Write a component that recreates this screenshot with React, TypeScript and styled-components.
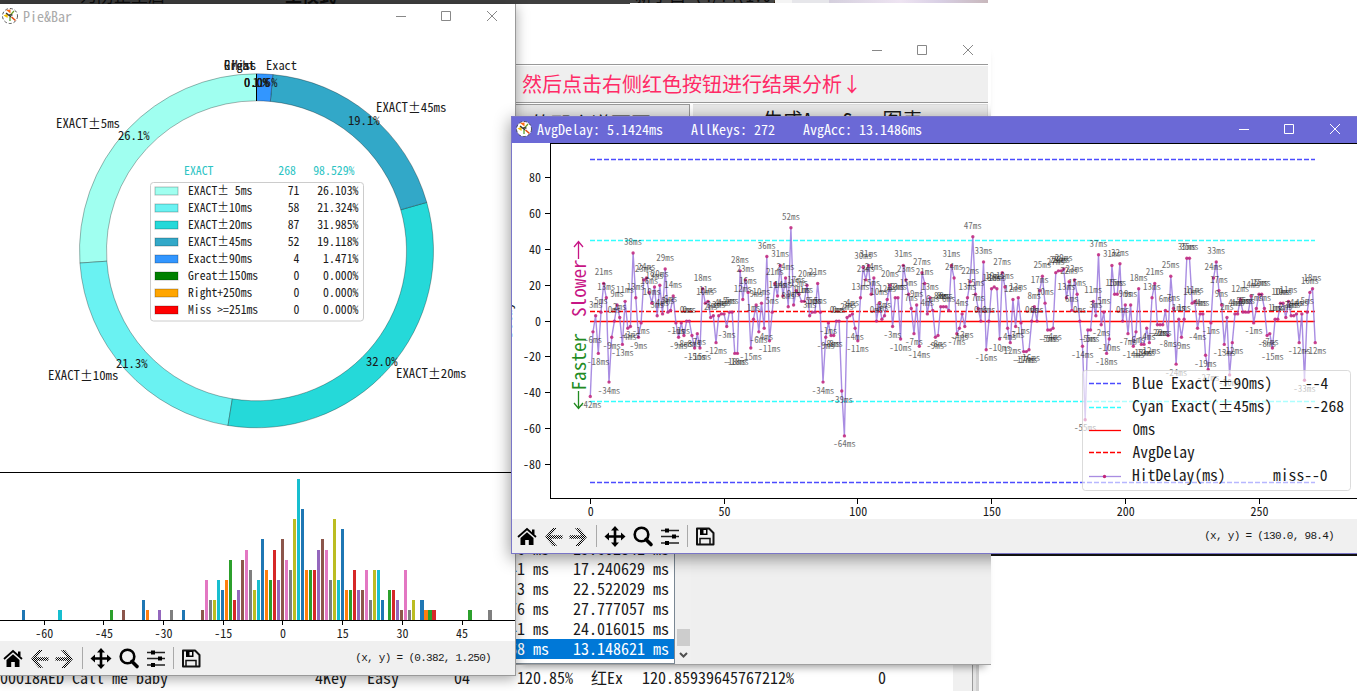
import React from "react";
import styled, { createGlobalStyle } from "styled-components";

const MONO = `"Noto Sans Mono CJK SC", "Noto Sans CJK SC", "Liberation Mono", monospace`;

const Global = createGlobalStyle`
  html, body { margin: 0; padding: 0; background: #fff; }
  body { font-family: ${MONO}; font-weight: 300; font-feature-settings: "hwid", "zero"; color: #1a1a1a; }
  * { box-sizing: border-box; }
  svg { display: block; }
`;

const Desktop = styled.div`
  position: relative;
  width: 1357px;
  height: 691px;
  overflow: hidden;
  background: #fff;
`;

const Strip = styled.div`
  position: absolute;
  left: 0;
  top: 0;
  width: 988px;
  height: 4px;
  display: flex;
  overflow: hidden;
`;

const StripPart = styled.div<{ $w: number; $bg: string; $h?: number }>`
  width: ${(p) => p.$w}px;
  height: ${(p) => p.$h ?? 4}px;
  overflow: hidden;
  background: ${(p) => p.$bg};
`;

const StripText = styled.span<{ $gap: number; $bold?: boolean }>`
  display: block;
  margin-left: ${(p) => p.$gap}px;
  margin-top: -15px;
  font-size: 17px;
  line-height: 20px;
  color: #0c0c0c;
  font-weight: ${(p) => (p.$bold ? 700 : 400)};
  white-space: nowrap;
`;

const EdgeLine = styled.div`
  position: absolute;
  left: 515px;
  top: 4px;
  width: 1px;
  height: 34px;
  background: #444;
`;

const ListWindow = styled.div`
  position: absolute;
  left: 0;
  top: 664px;
  width: 979px;
  height: 27px;
  display: flex;
  background: #fff;
`;

const SongRow = styled.div`
  width: 953px;
  height: 27px;
  display: grid;
  grid-template-columns: 315px 52px 87px 63px 74px 51px 236px 1fr;
  font-size: 16px;
  line-height: 27px;
  white-space: pre;
`;

const SideTrack = styled.div`
  width: 20px;
  background: #f0f0f0;
  border-right: 1px solid #9a9a9a;
`;

const SideEdge = styled.div`
  width: 6px;
  background: #e4e4e4;
  border-right: 3px solid #d0d0d0;
`;

const MainWindow = styled.div`
  position: absolute;
  left: 515px;
  top: 40px;
  width: 476px;
  height: 625px;
  display: flex;
  flex-direction: column;
  border-bottom: 1px solid #a0a0a0;
  box-shadow: 0 8px 8px -6px rgba(0, 0, 0, 0.4);
  background: #fff;
`;

const Caption = styled.div`
  height: 24px;
  width: 473px;
  display: flex;
  justify-content: flex-end;
`;

const Hint = styled.div`
  width: 473px;
  height: 39px;
  border-top: 1px solid #999;
  border-bottom: 1px solid #999;
  box-shadow: inset 0 1px #fff;
  background: #efefef;
  color: #ff2a66;
  font-size: 20px;
  line-height: 37px;
  padding-left: 7px;
  white-space: nowrap;
`;

const ButtonRow = styled.div`
  width: 473px;
  height: 24px;
  display: flex;
  gap: 3px;
  padding-top: 1px;
`;

const BigButton = styled.div<{ $w: number; $shift: number; $pad: number; $edge: string }>`
  width: ${(p) => p.$w}px;
  height: 30px;
  overflow: hidden;
  background: #e9e9e9;
  border-top: 1px solid ${(p) => p.$edge};
  border-right: 1px solid ${(p) => p.$edge};
  font-size: 20px;
  font-weight: 400;
  line-height: 30px;
  white-space: nowrap;
  padding-top: ${(p) => p.$shift}px;
  text-indent: ${(p) => p.$pad}px;
`;

const MainBody = styled.div`
  flex: 1;
  display: flex;
  align-items: flex-end;
  background: #efefef;
  margin-top: 300px;
`;

const Listbox = styled.div`
  width: 160px;
  height: 125px;
  overflow: hidden;
  background: #fff;
  border-right: 1px solid #7a8793;
  border-bottom: 1px solid #7a8793;
`;

const ListItem = styled.div<{ $on?: boolean }>`
  height: 20px;
  text-indent: -6px;
  font-size: 16px;
  line-height: 18px;
  white-space: pre;
  overflow: hidden;
  color: ${(p) => (p.$on ? "#fff" : "#1a1a1a")};
  background: ${(p) => (p.$on ? "#0078d7" : "#fff")};
`;

const Scroll = styled.div`
  width: 16px;
  height: 124px;
  display: flex;
  flex-direction: column;
  align-items: center;
  background: #f0f0f0;
`;

const Thumb = styled.div`
  width: 13px;
  height: 17px;
  margin: 89px 0 6px;
  background: #cdcdcd;
`;

const ShadowClip = styled.div`
  position: absolute;
  left: 490px;
  top: 100px;
  width: 501px;
  height: 490px;
  overflow: hidden;
  padding: 16px 0 0 21px;
`;

const ShadowBox = styled.div`
  width: 860px;
  height: 438px;
  box-shadow: 0 4px 16px rgba(0, 0, 0, 0.45);
`;

const BlackBar = styled.div`
  position: absolute;
  left: 991px;
  top: 553px;
  width: 366px;
  height: 3px;
  background: #111;
`;

const PieWindow = styled.div`
  position: absolute;
  left: 0;
  top: 4px;
  width: 516px;
  height: 672px;
  display: flex;
  flex-direction: column;
  background: #fff;
  border-right: 1px solid #999;
  border-bottom: 1px solid #999;
  box-shadow: 0 3px 12px rgba(0, 0, 0, 0.35);
`;

const DelayWindow = styled.div`
  position: absolute;
  left: 511px;
  top: 116px;
  width: 860px;
  height: 438px;
  display: flex;
  flex-direction: column;
  background: #fff;
  border: 1px solid #7a76c8;
`;

const TitleBar = styled.div<{ $active?: boolean }>`
  height: 26px;
  flex: none;
  display: flex;
  align-items: center;
  padding-bottom: 2px;
  padding-left: ${(p) => (p.$active ? 4 : 2)}px;
  background: ${(p) => (p.$active ? "#6b69d6" : "#fff")};
  color: ${(p) => (p.$active ? "#fff" : "#aaa")};
`;

const TitleText = styled.div<{ $w: number }>`
  width: ${(p) => p.$w}px;
  margin-left: 5px;
  font-size: 14px;
  line-height: 24px;
  white-space: pre;
`;

const Controls = styled.div<{ $color: string; $end: number; $lift?: boolean }>`
  margin-left: auto;
  margin-right: ${(p) => p.$end}px;
  margin-top: ${(p) => (p.$lift ? -1 : 0)}px;
  color: ${(p) => p.$color};
`;

const Toolbar = styled.div<{ $left: number; $right: number }>`
  height: 34px;
  flex: none;
  display: flex;
  align-items: center;
  justify-content: space-between;
  background: #f0f0f0;
  padding-left: ${(p) => p.$left}px;
  padding-right: ${(p) => p.$right}px;
`;

const Coords = styled.div`
  font-family: "Liberation Mono", monospace;
  font-size: 11px;
  font-weight: 400;
  letter-spacing: -0.7px;
  white-space: pre;
`;

const TAB = ["#1f77b4", "#ff7f0e", "#2ca02c", "#d62728", "#9467bd", "#8c564b", "#e377c2", "#7f7f7f", "#bcbd22", "#17becf"];

const DELAYS = [
  -42, -6, 3, -18, 5, 21, 13, -34, -9, 0, 9, 2, -13, 11, -4, -3, 38, 13, -9, -1, 23, 24, 16, 10, 19, 3, 20, 4, 29, 5,
  6, 14, -1, -9, -1, -8, 0, 0, -8, -15, -7, -15, 18, 10, 11, 2, 3, -12, 3, 4, 4, -3, 5, 5, -18, -18, 28, 12, 23, 16,
  -15, 1, 9, -6, 10, -4, 36, -11, 5, 21, 14, 31, 14, 24, 8, 52, 9, 17, 15, 11, 11, 20, 3, 5, 5, 21, 5, -34, -9, -1,
  -8, -8, 0, 0, -39, -64, 2, 3, 4, -4, -11, 13, 30, 23, 31, 15, 24, 0, 10, 1, 3, 12, 20, -3, 13, 13, -10, 31, 23, 15,
  7, -7, 9, -14, 27, 21, 4, 13, 6, -9, -8, 8, 8, 8, 6, 31, 24, -7, -4, 4, -3, 13, 22, 47, 15, 7, 0, 33, -16, 0,
  18, 19, 18, -10, 27, 19, -4, -12, 12, -3, 13, -1, -17, -17, -16, 0, 8, 0, 17, 25, 10, -5, -5, -4, 27, 28, 28, 29, 13, 22,
  6, 23, 15, 0, -14, -55, -5, -5, 11, 3, 37, -2, 5, -18, -10, 31, 15, 15, 32, 0, 9, -7, 9, -14, -6, 18, -13, -13, -4, -12,
  13, 21, -2, -2, -2, 6, -8, 25, 7, -24, 1, -9, 1, 35, 35, 10, 11, -4, 4, 4, -19, -27, -1, 24, 33, 17, 9, -13, 2, -30,
  -12, 4, 4, 12, 5, 5, 5, 14, -1, 7, 15, 15, 7, -8, -7, -15, 1, 1, 10, 10, 2, 11, 3, 3, 4, -12, 4, -33, 5, 16,
  18, -12,
];

const BARS: [number, number][] = [
  [-65, 1], [-56, 1], [-43, 1], [-40, 1], [-35, 2], [-34, 1], [-31, 1], [-28, 1], [-25, 1], [-20, 1], [-19, 4],
  [-18, 2], [-17, 2], [-16, 4], [-15, 3], [-14, 4], [-13, 6], [-12, 2], [-11, 3], [-10, 6], [-9, 7], [-8, 5],
  [-7, 3], [-6, 4], [-5, 8], [-4, 5], [-3, 4], [-2, 7], [-1, 4], [0, 8], [1, 6], [2, 5], [3, 10], [4, 14], [5, 11],
  [6, 5], [7, 5], [8, 5], [9, 7], [10, 8], [11, 7], [12, 4], [13, 10], [14, 4], [15, 9], [16, 3], [17, 3], [18, 5],
  [19, 3], [20, 3], [21, 5], [22, 2], [23, 5], [24, 5], [25, 2], [27, 3], [28, 3], [29, 2], [30, 1], [31, 5], [32, 1],
  [33, 2], [35, 2], [36, 1], [37, 1], [38, 1], [47, 1], [52, 1],
];

const LEGEND = [
  { label: "EXACT± 5ms", n: 71, pct: "26.103%", color: "#a0fff0" },
  { label: "EXACT±10ms", n: 58, pct: "21.324%", color: "#6af2f2" },
  { label: "EXACT±20ms", n: 87, pct: "31.985%", color: "#25d9d9" },
  { label: "EXACT±45ms", n: 52, pct: "19.118%", color: "#32a8c8" },
  { label: "Exact±90ms", n: 4, pct: "1.471%", color: "#3296ff" },
  { label: "Great±150ms", n: 0, pct: "0.000%", color: "#008000" },
  { label: "Right+250ms", n: 0, pct: "0.000%", color: "#ffa500" },
  { label: "Miss >=251ms", n: 0, pct: "0.000%", color: "#ff0000" },
];

interface LabelProps {
  x: number;
  y: number;
  size: number;
  children: string;
  adv?: number;
  anchor?: "start" | "middle" | "end";
  fill?: string;
  opacity?: number;
  transform?: string;
}

/* Text on a fixed half-width grid; ± takes two cells. */
function Label({ x, y, size, children, adv, anchor = "start", fill = "#1a1a1a", opacity, transform }: LabelProps) {
  const step = adv ?? size / 2;
  const parts = children.split(/(±)/).filter(Boolean);
  const cells = (s: string) => (s === "±" ? 2 : s.length);
  const total = parts.reduce((a, s) => a + cells(s), 0) * step;
  let cx = anchor === "end" ? x - total : anchor === "middle" ? x - total / 2 : x;
  return (
    <g fontSize={size} fill={fill} opacity={opacity} transform={transform}>
      {parts.map((s, i) => {
        const at = cx;
        cx += cells(s) * step;
        return (
          <text key={i} x={at} y={y} textLength={cells(s) * step} lengthAdjust="spacingAndGlyphs" xmlSpace="preserve">
            {s}
          </text>
        );
      })}
    </g>
  );
}

function WindowButtons() {
  return (
    <svg width="115" height="22" viewBox="0 0 115 22" fill="none" stroke="currentColor" strokeWidth="1">
      <path d="M0 11.500h10M45.500 6.500h9v9h-9z" />
      <path d="M91 6l10 10M101 6l-10 10" />
    </svg>
  );
}

function AppIcon() {
  return (
    <svg width="16" height="16" viewBox="0 0 16 16">
      <circle cx="8" cy="8" r="7.500" fill="#fff" stroke="#444" strokeWidth="0.900" strokeDasharray="3 2" />
      <path d="M4 2l4.500-.5v4z" fill="#ff6a10" />
      <path d="M1.500 7.500L6 5.500 5.500 10z" fill="#f5c000" />
      <path d="M4 5l5 4" stroke="#333" strokeWidth="1.300" />
      <path d="M8.500 7l3.500-4" stroke="#6a9a20" strokeWidth="1.200" />
      <path d="M8 9v4" stroke="#4a9a20" strokeWidth="1.200" />
      <path d="M9.500 9l4 3.500" stroke="#e04a10" strokeWidth="1.600" />
      <path d="M7 7h3.500" stroke="#222" strokeWidth="1.300" />
    </svg>
  );
}

function ToolIcons({ id }: { id: string }) {
  const dither = `url(#${id})`;
  return (
    <svg width="204" height="30" viewBox="0 0 204 30">
      <defs>
        <pattern id={id} width="2" height="2" patternUnits="userSpaceOnUse">
          <rect width="1" height="1" fill="#000" />
          <rect x="1" y="1" width="1" height="1" fill="#000" />
        </pattern>
      </defs>
      <path d="M4 16L13 8l9 8" fill="none" stroke="#000" strokeWidth="1.800" />
      <path d="M18 8.500h2.500v4.500H18zM6.500 17l6.500-5.800 6.500 5.800v7h-4.700v-5h-3.600v5H6.500z" />
      <path d="M31 16L39 7h4l-6.500 7.200H48.500v3.600H36.500L43 25h-4z" fill={dither} />
      <path d="M73 16L65 7h-4l6.500 7.200H55.500v3.600H67.500L61 25h4z" fill={dither} />
      <path d="M82.500 4v22M173.500 4v22" stroke="#a9a9a9" />
      <path d="M93 15.500h16M101 7v17" stroke="#000" strokeWidth="2.600" />
      <path d="M101 5l4 4.500h-8zM101 26l4-4.500h-8zM90.500 15.500l4.500-4v8zM111.500 15.500l-4.500-4v8z" />
      <circle cx="127.500" cy="13.500" r="6.800" fill="none" stroke="#000" strokeWidth="2.600" />
      <path d="M132 18.500l5 5" stroke="#000" strokeWidth="3.600" strokeLinecap="round" />
      <path d="M147 9.500h18M147 15.500h18M147 22h18" stroke="#222" strokeWidth="1.600" />
      <path d="M151 7.500h4v4h-4zM158 13.500h4v4h-4zM151 20h4v4h-4z" />
      <path d="M183 7.500h12l4.500 4.500v11.500H183z" fill="none" stroke="#111" strokeWidth="2" strokeLinejoin="round" />
      <path d="M186 8h7.500v6H186z" />
      <path d="M189.500 9h2.500v3.500h-2.500z" fill="#f0f0f0" />
      <path d="M186 23v-5.500h10V23" fill="none" stroke="#111" strokeWidth="1.500" />
    </svg>
  );
}

function PieBarChart() {
  const cx = 256.5;
  const cy = 250.8;
  const R = 177;
  const r = 150;
  let acc = 0;
  const pt = (f: number, rad: number) => {
    const a = Math.PI / 2 + f * 2 * Math.PI;
    return `${(cx + rad * Math.cos(a)).toFixed(2)} ${(cy - rad * Math.sin(a)).toFixed(2)}`;
  };
  return (
    <svg width="515" height="611" viewBox="0 30 515 611">
      {LEGEND.slice(0, 5).map((s) => {
        const a = acc / 272;
        acc += s.n;
        const b = acc / 272;
        const big = b - a > 0.5 ? 1 : 0;
        return (
          <path
            key={s.label}
            d={`M${pt(a, R)}A${R} ${R} 0 ${big} 0 ${pt(b, R)}L${pt(b, r)}A${r} ${r} 0 ${big} 1 ${pt(a, r)}Z`}
            fill={s.color}
            stroke="#000"
            strokeOpacity="0.5"
            strokeWidth="0.600"
          />
        );
      })}
      <path d="M256.500 74v27" stroke="#000" />
      {["Great", "Right"].map((t) => (
        <Label key={t} x={224} y={69.5} size={12.4} adv={6.2}>{t}</Label>
      ))}
      <Label x={231.5} y={69.5} size={12.4} adv={6.2}>Miss</Label>
      <Label x={266} y={69.5} size={12.4} adv={6.2}>Exact</Label>
      {[0, 1, 2].map((k) => (
        <Label key={k} x={256.5} y={87} size={12.4} adv={6.2} anchor="middle">0.0%</Label>
      ))}
      <Label x={265} y={87} size={12.4} adv={6.2} anchor="middle">1.5%</Label>
      <Label x={376} y={112} size={12.6} adv={6.4}>EXACT±45ms</Label>
      <Label x={348} y={125} size={12.6} adv={6.3}>19.1%</Label>
      <Label x={56} y={128} size={12.6} adv={6.4}>EXACT±5ms</Label>
      <Label x={118} y={140} size={12.6} adv={6.3}>26.1%</Label>
      <Label x={48} y={380} size={12.6} adv={6.4}>EXACT±10ms</Label>
      <Label x={116} y={368} size={12.6} adv={6.3}>21.3%</Label>
      <Label x={396} y={378} size={12.6} adv={6.4}>EXACT±20ms</Label>
      <Label x={366} y={366} size={12.6} adv={6.3}>32.0%</Label>

      <g>
        <Label x={184} y={175} size={12} adv={5.9} fill="#2cc4c4">EXACT</Label>
        <Label x={296} y={175} size={12} adv={5.9} anchor="end" fill="#2cc4c4">268</Label>
        <Label x={354.5} y={175} size={12} adv={5.9} anchor="end" fill="#2cc4c4">98.529%</Label>
      </g>
      <rect x="150.500" y="182.500" width="213" height="138.500" rx="3" fill="#fff" stroke="#ccc" />
      {LEGEND.map((s, i) => (
        <g key={s.label}>
          <rect x="155" y={187 + i * 17} width="23" height="8" fill={s.color} stroke="#000" strokeOpacity="0.25" />
          <Label x={188} y={195 + i * 17} size={12} adv={5.85}>{s.label}</Label>
          <Label x={299.5} y={195 + i * 17} size={12} adv={5.9} anchor="end">{String(s.n)}</Label>
          <Label x={358.5} y={195 + i * 17} size={12} adv={5.9} anchor="end">{s.pct}</Label>
        </g>
      ))}

      {BARS.map(([v, n]) => (
        <rect
          key={v}
          x={Math.round(281 + v * 3.98)}
          y={Math.round(620 - n * 10.07)}
          width={v >= 35 || v === -56 ? 4 : 3}
          height={Math.round(n * 10.07)}
          fill={TAB[(v + 75) % 10]}
        />
      ))}
      <path d="M0 472.500h515M0 620.500h515" stroke="#000" />
      {[-60, -45, -30, -15, 0, 15, 30, 45].map((v) => (
        <g key={v}>
          <path d={`M${Math.round(282.4 + v * 3.98) + 0.5} 621v4`} stroke="#000" />
          <Label x={283 + v * 3.98} y={638} size={12.2} adv={6} anchor="middle">{String(v)}</Label>
        </g>
      ))}
    </svg>
  );
}

const px = (i: number) => 590.3 + i * 2.675;
const py = (v: number) => 321.1 - v * 1.794;

function DelayChart() {
  const dash = "5 2";
  const rows = [384, 407, 430, 453, 476];
  return (
    <svg width="858" height="376" viewBox="512 143 858 376">
      <Label x={0} y={0} size={14} adv={7} anchor="middle" transform="translate(512 320) rotate(-90)">Delay</Label>
      <g fill="none" strokeWidth="1.300" strokeDasharray={dash}>
        <path d="M590 159.500H1315M590 482.500H1315" stroke="#0000ff" opacity="0.700" />
        <path d="M590 240.500H1315M590 401.500H1315" stroke="#00ffff" opacity="0.800" />
        <path d="M590 311.500H1315" stroke="#ff0000" />
      </g>
      <path d="M590 321.500H1315" stroke="#ff0000" strokeWidth="1.300" />
      <polyline
        points={DELAYS.map((v, i) => `${px(i).toFixed(1)},${py(v).toFixed(1)}`).join(" ")}
        fill="none"
        stroke="#9370db"
        strokeOpacity="0.800"
        strokeWidth="1.400"
        strokeLinejoin="round"
      />
      {DELAYS.map((v, i) => (
        <circle key={i} cx={px(i)} cy={py(v)} r="1.700" fill="#c2267c" fillOpacity="0.850" />
      ))}
      {DELAYS.map((v, i) => (
        <Label key={i} x={px(i)} y={py(v) + (v < 0 ? 11.5 : -8)} size={9} adv={4.5} anchor="middle" opacity={0.65}>
          {`${v}ms`}
        </Label>
      ))}
      <g transform="translate(586 317) rotate(-90)">
        <Label x={0} y={0} size={19} adv={9.6} fill="#c71585">Slower</Label>
        <path d="M58 -7.500H75M70 -12l5.500 4.500L70 -3" fill="none" stroke="#c71585" strokeWidth="1.300" />
      </g>
      <g transform="translate(586 409) rotate(-90)">
        <path d="M18 -7.500H1M6 -12L.5 -7.500 6 -3" fill="none" stroke="#228b22" strokeWidth="1.300" />
        <Label x={18.5} y={0} size={19} adv={9.6} fill="#228b22">Faster</Label>
      </g>

      <path d="M550.500 143v356M550 143.500h820M550 498.500h820" stroke="#000" fill="none" />
      {[80, 60, 40, 20, 0, -20, -40, -60, -80].map((v) => (
        <g key={v}>
          <path d={`M545 ${Math.floor(py(v)) + 0.5}h5`} stroke="#000" />
          <Label x={541} y={py(v) + 4.4} size={12.2} adv={6} anchor="end">{String(v)}</Label>
        </g>
      ))}
      {[0, 50, 100, 150, 200, 250].map((v) => (
        <g key={v}>
          <path d={`M${Math.floor(px(v)) + 0.5} 499v5`} stroke="#000" />
          <Label x={px(v) + 0.5} y={516} size={12.2} adv={6} anchor="middle">{String(v)}</Label>
        </g>
      ))}

      <rect x="1082.500" y="370.500" width="268" height="120" rx="3" fill="#fff" fillOpacity="0.600" stroke="#ccc" strokeOpacity="0.700" />
      <g fill="none" strokeWidth="1.300">
        <path d="M1089 383.500h32" stroke="#0000ff" opacity="0.700" strokeDasharray={dash} />
        <path d="M1089 407.500h32" stroke="#00ffff" opacity="0.800" strokeDasharray={dash} />
        <path d="M1089 430.500h32" stroke="#ff0000" />
        <path d="M1089 452.500h32" stroke="#ff0000" strokeDasharray={dash} />
        <path d="M1089 476.500h32" stroke="#9370db" opacity="0.800" />
      </g>
      <circle cx="1104.500" cy="476.500" r="1.700" fill="#c2267c" />
      <Label x={1132} y={rows[0] + 5} size={15.6} adv={7.8}>Blue Exact(±90ms)</Label>
      <Label x={1305} y={rows[0] + 5} size={15.6} adv={7.8}>--4</Label>
      <Label x={1132} y={rows[1] + 5} size={15.6} adv={7.8}>Cyan Exact(±45ms)</Label>
      <Label x={1305} y={rows[1] + 5} size={15.6} adv={7.8}>--268</Label>
      <Label x={1132.5} y={rows[2] + 5} size={15.6} adv={7.6}>0ms</Label>
      <Label x={1132.5} y={rows[3] + 5} size={15.6} adv={7.8}>AvgDelay</Label>
      <Label x={1132} y={rows[4] + 5} size={15.6} adv={7.8}>HitDelay(ms)</Label>
      <Label x={1273} y={rows[4] + 5} size={15.6} adv={7.8}>miss--0</Label>
    </svg>
  );
}

export default function App() {
  return (
    <Desktop>
      <Global />
      <Strip>
        <StripPart $w={280} $bg="#3c3c3c"><StripText $gap={80}>为防止重启</StripText></StripPart>
        <StripPart $w={350} $bg="#404040"><StripText $gap={5} $bold>主模式</StripText></StripPart>
        <StripPart $w={145} $bg="#444" $h={3}><StripText $gap={5}>新于白 (4/74(1.0)</StripText></StripPart>
        <StripPart $w={17} $bg="#f4f4f4" $h={3} />
        <StripPart $w={37} $bg="#e6e6ea" $h={3} />
        <StripPart $w={159} $h={3} $bg="linear-gradient(90deg,#d4cfdd,#eee4f2 45%,#d8cfe4 70%,#c8b8bc)" />
      </Strip>
      <EdgeLine />

      <ListWindow>
        <SongRow>
          <span>00018AED Call me baby</span>
          <span>4Key</span>
          <span>Easy</span>
          <span>04</span>
          <span>120.85%</span>
          <span>红Ex</span>
          <span>120.85939645767212%</span>
          <span>0</span>
        </SongRow>
        <SideTrack />
        <SideEdge />
      </ListWindow>

      <MainWindow>
        <Caption>
          <Controls $color="#888" $end={1} $lift><WindowButtons /></Controls>
        </Caption>
        <Hint>然后点击右侧红色按钮进行结果分析↓</Hint>
        <ButtonRow>
          <BigButton $w={175} $shift={4} $pad={-4} $edge="#999">下的那个谱面再只</BigButton>
          <BigButton $w={296} $shift={0} $pad={70} $edge="#dcdcdc">生成Acc-Sync图表</BigButton>
        </ButtonRow>
        <MainBody>
          <Listbox>
            <ListItem>36 ms   19.602841 ms</ListItem>
            <ListItem>41 ms   17.240629 ms</ListItem>
            <ListItem>33 ms   22.522029 ms</ListItem>
            <ListItem>76 ms   27.777057 ms</ListItem>
            <ListItem>41 ms   24.016015 ms</ListItem>
            <ListItem $on>68 ms   13.148621 ms</ListItem>
          </Listbox>
          <Scroll>
            <Thumb />
            <svg width="9" height="7" viewBox="0 0 9 7" fill="none" stroke="#505050" strokeWidth="2">
              <path d="M1 1l3.500 3.500L8 1" />
            </svg>
          </Scroll>
        </MainBody>
      </MainWindow>

      <PieWindow>
        <TitleBar>
          <AppIcon />
          <TitleText $w={200}>Pie&amp;Bar</TitleText>
          <Controls $color="#888" $end={4}><WindowButtons /></Controls>
        </TitleBar>
        <PieBarChart />
        <Toolbar $left={0} $right={24}>
          <ToolIcons id="dither-pie" />
          <Coords>(x, y) = (0.382, 1.250)</Coords>
        </Toolbar>
      </PieWindow>

      <ShadowClip>
        <ShadowBox />
      </ShadowClip>
      <BlackBar />
      <DelayWindow>
        <TitleBar $active>
          <AppIcon />
          <TitleText $w={420}>AvgDelay: 5.1424ms    AllKeys: 272    AvgAcc: 13.1486ms</TitleText>
          <Controls $color="#fff" $end={16}><WindowButtons /></Controls>
        </TitleBar>
        <DelayChart />
        <Toolbar $left={2} $right={36}>
          <ToolIcons id="dither-delay" />
          <Coords>(x, y) = (130.0, 98.4)</Coords>
        </Toolbar>
      </DelayWindow>
    </Desktop>
  );
}
